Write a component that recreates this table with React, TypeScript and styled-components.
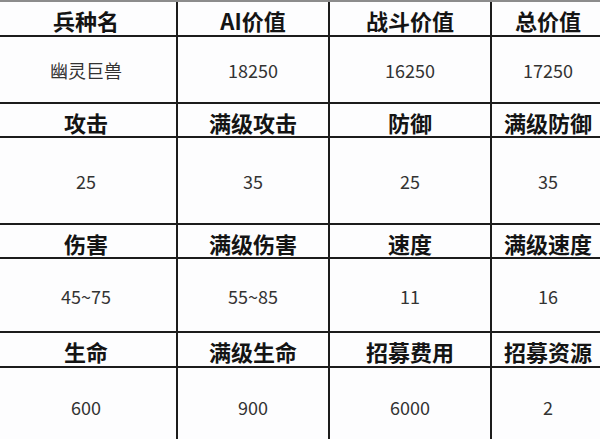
import React from 'react';
import styled, { createGlobalStyle } from 'styled-components';

interface StatRow {
  labels: string[];
  values: string[];
  height: number;
}

const GlobalStyle = createGlobalStyle`
  html, body {
    margin: 0;
    padding: 0;
    background: #fdfdfe;
    overflow: hidden;
  }
`;

const Page = styled.div`
  width: 600px;
  height: 439px;
  overflow: hidden;
  background: #fdfdfe;
`;

const Grid = styled.div`
  display: grid;
  grid-template-columns: 180px 150px 160px 112px;
  gap: 2px;
  width: 608px;
  margin-left: -4px;
  background: #1c1c1c;
  border-top: 2px solid #8c8c8c;
  font-family: 'Noto Sans CJK SC', 'Noto Sans', sans-serif;
`;

const Cell = styled.div<{ $h: number; $head?: boolean }>`
  height: ${(p) => p.$h}px;
  background: #fdfdfe;
  display: flex;
  align-items: center;
  justify-content: center;
  box-sizing: border-box;
  padding-top: ${(p) => (p.$head ? 3 : 1)}px;
  font-size: ${(p) => (p.$head ? 22 : 18)}px;
  font-weight: ${(p) => (p.$head ? 700 : 400)};
  color: ${(p) => (p.$head ? '#141414' : '#333')};
  white-space: nowrap;
  line-height: 1;
`;

const rows: StatRow[] = [
  { labels: ['兵种名', 'AI价值', '战斗价值', '总价值'], values: ['幽灵巨兽', '18250', '16250', '17250'], height: 65 },
  { labels: ['攻击', '满级攻击', '防御', '满级防御'], values: ['25', '35', '25', '35'], height: 85 },
  { labels: ['伤害', '满级伤害', '速度', '满级速度'], values: ['45~75', '55~85', '11', '16'], height: 72 },
  { labels: ['生命', '满级生命', '招募费用', '招募资源'], values: ['600', '900', '6000', '2'], height: 76 },
];

const headHeights = [33, 32, 32, 33];

const App: React.FC = () => {
  return (
    <Page>
      <GlobalStyle />
      <Grid>
        {rows.map((row, i) => (
          <React.Fragment key={i}>
            {row.labels.map((l) => (
              <Cell key={'h' + l} $h={headHeights[i]} $head>
                {l}
              </Cell>
            ))}
            {row.values.map((v, j) => (
              <Cell key={'v' + j} $h={row.height}>
                {v}
              </Cell>
            ))}
          </React.Fragment>
        ))}
      </Grid>
    </Page>
  );
};

export default App;
